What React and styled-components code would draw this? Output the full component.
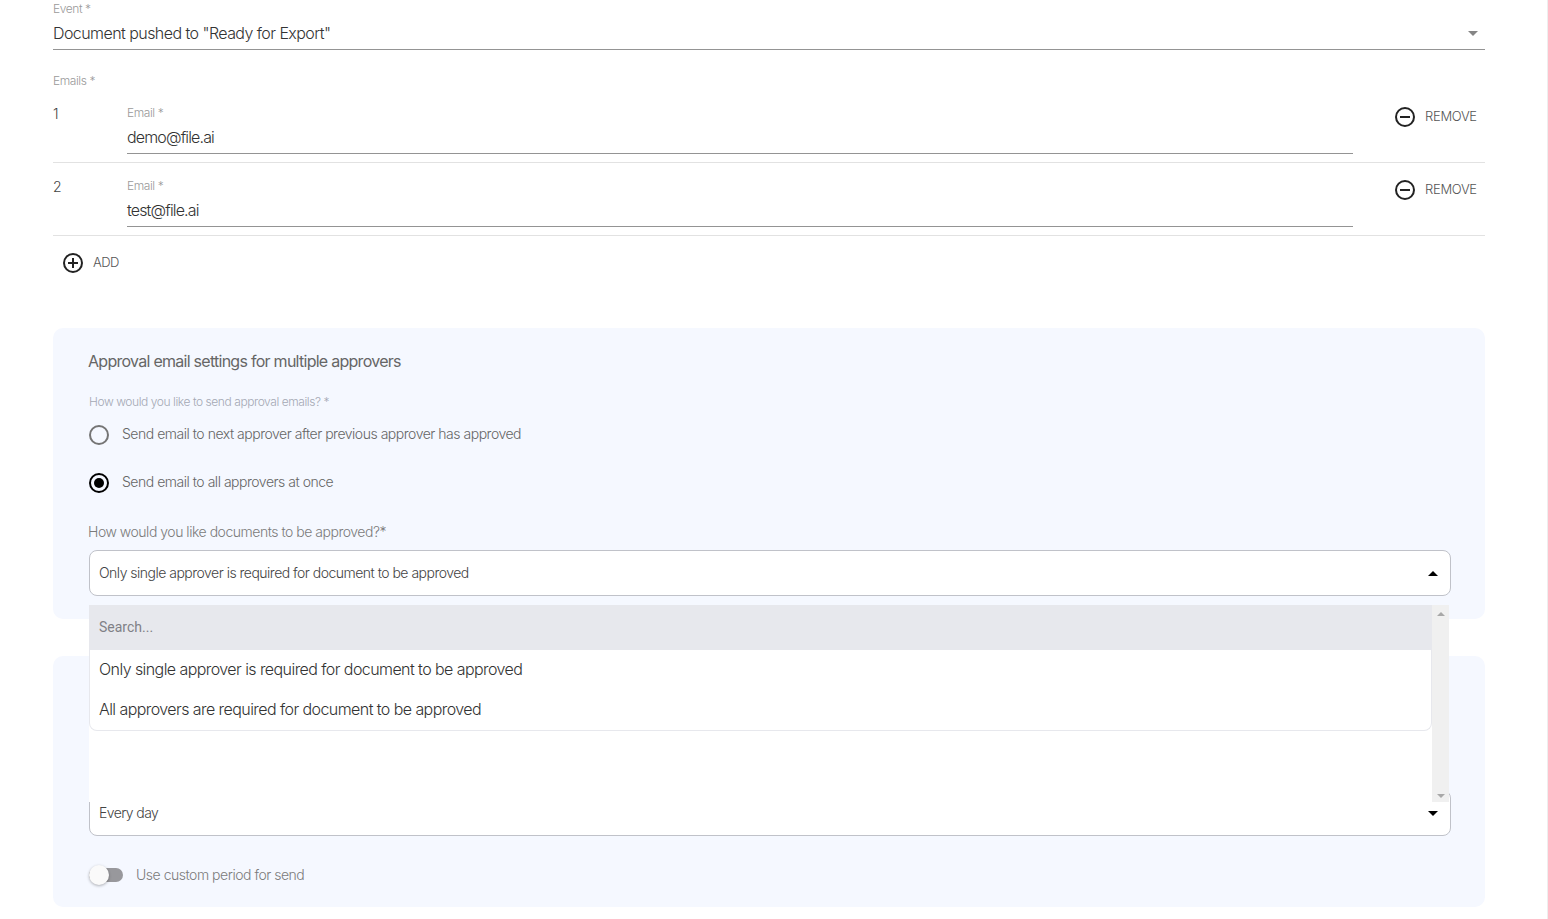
import React from "react";
import styled, { createGlobalStyle } from "styled-components";

const Global = createGlobalStyle`
  html, body { margin: 0; padding: 0; background: #fff; height: 100%; overflow: hidden; }
  * { box-sizing: border-box; }
  body { font-family: Inter, "Liberation Sans", sans-serif; font-weight: 300; }
`;

const Page = styled.div`
  width: 1548px;
  height: 919px;
  padding: 1px 62px 0 53px;
  border-right: 1px solid #eeeeee;
  overflow: hidden;
`;

const SmallLabel = styled.div`
  font-size: 12px;
  line-height: 16px;
  letter-spacing: -0.42px;
  color: #9a9a9a;
`;

const ValueLine = styled.div`
  display: flex;
  align-items: center;
  justify-content: space-between;
  margin-top: 4px;
  padding: 0 7px 4px 0;
  height: 29px;
  border-bottom: 1px solid #949494;
  font-size: 16px;
  line-height: 24px;
  letter-spacing: ${(p) => p.$spacing || "-0.56px"};
  color: #333;
`;

const EmailsLabel = styled(SmallLabel)`
  margin-top: 23px;
  margin-bottom: 1px;
`;

const Row = styled.div`
  display: grid;
  grid-template-columns: 74px 1226px 1fr;
  padding: 15px 0 8px;
  border-bottom: 1px solid #e2e2e2;
`;

const RowIndex = styled.div`
  font-size: 14px;
  line-height: 16px;
  margin-top: 1px;
  color: #444;
`;

const ActionButton = styled.div`
  display: flex;
  align-items: center;
  gap: 10px;
  font-size: 13px;
  line-height: 18px;
  letter-spacing: -0.3px;
  color: #555;
`;

const ActionText = styled.span`
  margin-bottom: 2px;
  letter-spacing: ${(p) => p.$spacing || "inherit"};
`;

const RemoveButton = styled(ActionButton)`
  align-self: start;
  margin: 2px 0 0 42px;
`;

const AddButton = styled(ActionButton)`
  margin: 17px 0 0 10px;
`;

const Panel = styled.section`
  background: #f5f8ff;
  border-radius: 10px;
  padding: ${(p) => p.$pad};
  margin-top: ${(p) => p.$top}px;
`;

const PanelTitle = styled.h2`
  margin: 0 0 0 -1px;
  font-size: 16px;
  font-weight: 400;
  line-height: 20px;
  letter-spacing: -0.73px;
  color: #666;
`;

const RadioLabel = styled(SmallLabel)`
  margin-top: 23px;
  letter-spacing: -0.43px;
  color: #a4a8b4;
`;

const RadioGroup = styled.div`
  margin-top: 0;
`;

const RadioRow = styled.div`
  display: flex;
  align-items: center;
  gap: 13px;
  height: 48px;
  font-size: 14px;
  letter-spacing: -0.48px;
  color: #666;
`;

const RadioText = styled.span`
  margin-bottom: 2px;
`;

const RadioMark = styled.span`
  display: flex;
  align-items: center;
  justify-content: center;
  width: 20px;
  height: 20px;
  margin-top: 2px;
  border-radius: 50%;
  border: 2px solid ${(p) => (p.$on ? "#000" : "#757575")};
  &::after {
    content: "";
    width: 10px;
    height: 10px;
    border-radius: 50%;
    background: ${(p) => (p.$on ? "#000" : "transparent")};
  }
`;

const Question = styled.div`
  margin: 16px 0 -1px -1px;
  font-size: 14px;
  line-height: 20px;
  letter-spacing: -0.48px;
  color: #7b7b7b;
`;

const SelectWrap = styled.div`
  position: relative;
  margin-top: 9px;
`;

const SelectBox = styled.div`
  display: flex;
  align-items: center;
  justify-content: space-between;
  height: 46px;
  padding: 0 12px 0 9px;
  background: #fff;
  border: 1px solid #c0c2c9;
  border-radius: 8px;
  font-size: 14px;
  letter-spacing: ${(p) => p.$spacing || "-0.51px"};
  color: #444;
`;

const SelectText = styled.span`
  margin-bottom: 2px;
`;

const Dropdown = styled.div`
  position: absolute;
  z-index: 5;
  top: calc(100% + 9px);
  left: 0;
  right: 2px;
  height: 197px;
  display: flex;
  background: #fff;
`;

const DropCard = styled.div`
  flex: 1;
  align-self: flex-start;
  border: 1px solid #e7e8ed;
  border-top: 0;
  border-radius: 0 0 8px 8px;
  overflow: hidden;
`;

const SearchRow = styled.div`
  display: flex;
  align-items: center;
  height: 45px;
  margin: 0 -1px;
  padding: 0 0 1px 10px;
  background: #e7e8ed;
  font-family: Roboto, sans-serif;
  font-weight: 400;
  font-size: 14px;
  color: #808086;
`;

const Option = styled.div`
  display: flex;
  align-items: center;
  height: 40px;
  padding: 0 0 2px 9px;
  font-size: 16px;
  letter-spacing: -0.57px;
  color: #333;
`;

const ScrollBar = styled.div`
  display: flex;
  flex-direction: column;
  align-items: center;
  justify-content: space-between;
  width: 17px;
  padding: 7px 0 4px;
  background: #f0f0f0;
`;

const ToggleRow = styled.div`
  display: flex;
  align-items: center;
  gap: 13px;
  margin-top: 29px;
  height: 20px;
  font-size: 14px;
  letter-spacing: -0.48px;
  color: #7b7b7b;
`;

const Track = styled.span`
  position: relative;
  display: block;
  width: 34px;
  height: 14px;
  border-radius: 7px;
  background: #98989c;
`;

const Knob = styled.span`
  position: absolute;
  left: 0;
  top: -3px;
  width: 20px;
  height: 20px;
  border-radius: 50%;
  background: #fafafa;
  box-shadow: 0 1px 3px rgba(0, 0, 0, 0.3);
`;

const Caret = ({ up, color = "#000", w = 10, h = 5 }) => (
  <svg width={w} height={h} viewBox="0 0 10 5" style={{ display: "block", flex: "none" }}>
    <path d={up ? "M0 5 L5 0 L10 5 Z" : "M0 0 L5 5 L10 0 Z"} fill={color} />
  </svg>
);

const CircleIcon = ({ plus }) => (
  <svg width="20" height="20" viewBox="0 0 20 20" fill="none" stroke="#222" strokeWidth="2" style={{ flex: "none" }}>
    <circle cx="10" cy="10" r="9" />
    <path d="M5 10 H15" />
    {plus && <path d="M10 5 V15" />}
  </svg>
);

const EmailRow = ({ index, email }) => (
  <Row>
    <RowIndex>{index}</RowIndex>
    <div>
      <SmallLabel>Email *</SmallLabel>
      <ValueLine $spacing="-0.85px">{email}</ValueLine>
    </div>
    <RemoveButton>
      <CircleIcon />
      <ActionText>REMOVE</ActionText>
    </RemoveButton>
  </Row>
);

export default function App() {
  return (
    <Page>
      <Global />
      <SmallLabel>Event *</SmallLabel>
      <ValueLine>
        Document pushed to "Ready for Export"
        <Caret color="#858585" />
      </ValueLine>
      <EmailsLabel>Emails *</EmailsLabel>
      <EmailRow index="1" email="demo@file.ai" />
      <EmailRow index="2" email="test@file.ai" />
      <AddButton>
        <CircleIcon plus />
        <ActionText $spacing="-0.6px">ADD</ActionText>
      </AddButton>

      <Panel $top={55} $pad="23px 34px 23px 36px">
        <PanelTitle>Approval email settings for multiple approvers</PanelTitle>
        <RadioLabel>How would you like to send approval emails? *</RadioLabel>
        <RadioGroup>
          <RadioRow>
            <RadioMark />
            <RadioText>Send email to next approver after previous approver has approved</RadioText>
          </RadioRow>
          <RadioRow>
            <RadioMark $on />
            <RadioText>Send email to all approvers at once</RadioText>
          </RadioRow>
        </RadioGroup>
        <Question>How would you like documents to be approved?*</Question>
        <SelectWrap>
          <SelectBox>
            <SelectText>Only single approver is required for document to be approved</SelectText>
            <Caret up />
          </SelectBox>
          <Dropdown>
            <DropCard>
              <SearchRow>Search...</SearchRow>
              <Option>Only single approver is required for document to be approved</Option>
              <Option>All approvers are required for document to be approved</Option>
            </DropCard>
            <ScrollBar>
              <Caret up color="#a8a8a8" w={8} h={4} />
              <Caret color="#a8a8a8" w={8} h={4} />
            </ScrollBar>
          </Dropdown>
        </SelectWrap>
      </Panel>

      <Panel $top={37} $pad="125px 34px 22px 36px">
        <SelectWrap>
          <SelectBox $spacing="-0.6px">
            <SelectText>Every day</SelectText>
            <Caret />
          </SelectBox>
        </SelectWrap>
        <ToggleRow>
          <Track><Knob /></Track>
          <RadioText>Use custom period for send</RadioText>
        </ToggleRow>
      </Panel>
    </Page>
  );
}
